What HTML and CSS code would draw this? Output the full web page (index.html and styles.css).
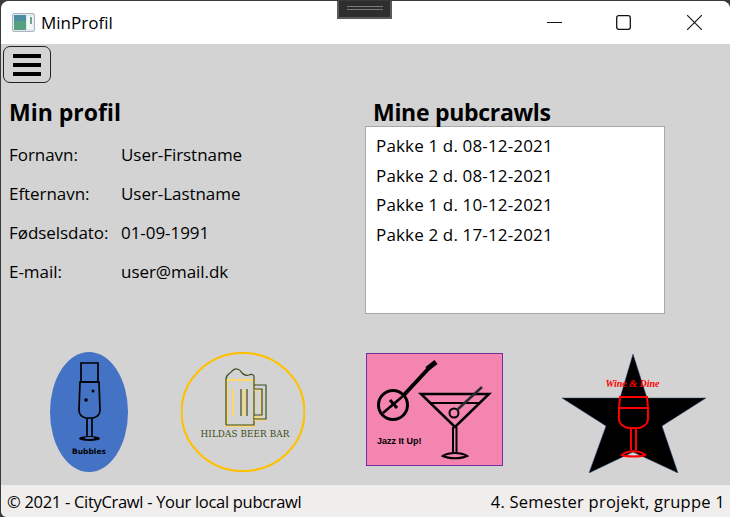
FILE: index.html
```
<!DOCTYPE html>
<html lang="da">
<head>
<meta charset="utf-8">
<title>MinProfil</title>
<link rel="stylesheet" href="styles.css">
</head>
<body>
<div class="window">
  <div class="grip"><span class="grip-lines"></span></div>
  <header class="titlebar">
    <svg class="app-icon" width="24" height="20" viewBox="0 0 24 20">
      <rect x="0.5" y="0.5" width="22" height="18" rx="1.5" fill="#e4e9f0" stroke="#aab4c4"/>
      <rect x="2" y="2" width="12" height="15" fill="#55a07f"/>
      <rect x="2" y="2" width="12" height="6" fill="#4a8ea0"/>
      <rect x="15" y="3" width="6" height="13" fill="#f4f7fa"/>
      <rect x="18" y="4" width="2" height="7" fill="#6fa585"/>
    </svg>
    <span class="app-title">MinProfil</span>
    <div class="win-controls">
      <svg class="win-btn win-min" width="15" height="15" viewBox="0 0 15 15"><path d="M0 7.5H15" stroke="#111" fill="none"/></svg>
      <svg class="win-btn" width="15" height="15" viewBox="0 0 15 15"><rect x="0.7" y="0.7" width="13.6" height="13.6" rx="2" stroke="#111" stroke-width="1.3" fill="none"/></svg>
      <svg class="win-btn" width="15" height="15" viewBox="0 0 15 15"><path d="M0 0L15 15M15 0L0 15" stroke="#111" stroke-width="1.1" fill="none"/></svg>
    </div>
  </header>

  <main class="content">
    <button class="menu-btn" type="button" aria-label="Menu">
      <span class="bar"></span><span class="bar"></span><span class="bar"></span>
    </button>

    <div class="columns">
      <section class="profile">
        <h2 class="heading heading-profile">Min profil</h2>
        <dl class="fields">
          <div class="field"><dt>Fornavn:</dt><dd>User-Firstname</dd></div>
          <div class="field"><dt>Efternavn:</dt><dd>User-Lastname</dd></div>
          <div class="field"><dt>Fødselsdato:</dt><dd>01-09-1991</dd></div>
          <div class="field"><dt>E-mail:</dt><dd>user@mail.dk</dd></div>
        </dl>
      </section>
      <section class="crawls">
        <h2 class="heading crawls-heading">Mine pubcrawls</h2>
        <ul class="listbox">
          <li>Pakke 1 d. 08-12-2021</li>
          <li>Pakke 2 d. 08-12-2021</li>
          <li>Pakke 1 d. 10-12-2021</li>
          <li>Pakke 2 d. 17-12-2021</li>
        </ul>
      </section>
    </div>

    <div class="logos">
      <svg class="logo logo-bubbles" width="78" height="120" viewBox="0 0 78 120">
        <ellipse cx="39" cy="60" rx="39" ry="60" fill="#4472c4"/>
        <g fill="none" stroke="#000" stroke-width="1.7">
          <path d="M31 11H48V30H31Z"/>
          <path d="M30 30H49L50 58C50 63 47 65 43 66H36C32 65 29 63 29 58Z"/>
          <path d="M37 66V85M42 66V85"/>
        </g>
        <ellipse cx="39.500" cy="86.500" rx="10.500" ry="2.500" fill="#000"/>
        <ellipse cx="39.500" cy="86" rx="5" ry="1" fill="#4472c4"/>
        <circle cx="36" cy="48" r="1.800" fill="#000"/>
        <circle cx="43" cy="39" r="1.500" fill="#000"/>
        <text class="logo-text-bubbles" x="39" y="102">Bubbles</text>
      </svg>

      <svg class="logo logo-beer" width="124" height="120" viewBox="0 0 124 120">
        <ellipse cx="62" cy="60" rx="61.500" ry="59" fill="none" stroke="#ffc000" stroke-width="2.200"/>
        <g fill="none">
          <path d="M45 28H73M46 27V74H73V28" stroke="#ffd966" stroke-width="2"/>
          <path d="M45 27V72C45 73 45 73 46 73H73V25C73 22 70 22 68 23C65 24 62 22 61 21C58 16 54 16 51 19C49 22 45 22 45 27Z" stroke="#3b4d20" stroke-width="1.200"/>
          <path d="M73 38H80V65H73M73 68H85" stroke="#ffd966" stroke-width="1.500"/>
          <path d="M73 33H85V67H73M73 37H81V63H73" stroke="#3b4d20" stroke-width="1.200"/>
          <path d="M52 37V64M63 37V64" stroke="#ffd966" stroke-width="2"/>
          <path d="M60 37V64M66 37V64" stroke="#3b4d20" stroke-width="1.200"/>
        </g>
        <text class="logo-text-beer" x="64" y="85">HILDAS BEER BAR</text>
      </svg>

      <svg class="logo logo-jazz" width="137" height="113" viewBox="0 0 137 113">
        <rect x="0.500" y="0.500" width="136" height="112" fill="#f385b0" stroke="#7030a0"/>
        <g fill="none" stroke="#000">
          <circle cx="27" cy="52" r="14.500" stroke-width="3"/>
          <path d="M17 60L37 43" stroke-width="2.500"/>
          <path d="M37 43L63 15" stroke-width="4"/>
          <path d="M24 47L31 55" stroke-width="3"/>
          <path d="M61 16L70 9" stroke-width="5"/>
          <path d="M55 41H123L89 74Z" stroke-width="2.500"/>
          <path d="M64 50H114" stroke-width="2.200"/>
          <path d="M87 74V99M90.500 74V99" stroke-width="2"/>
          <path d="M77 103C83 99 95 99 101 103C95 106 83 106 77 103Z" stroke-width="2.200"/>
          <circle cx="88" cy="60" r="4.500" stroke-width="2"/>
          <path d="M91 57L116 34" stroke-width="2.500" stroke="#2a2a2a"/>
        </g>
        <text class="logo-text-jazz" x="11" y="91">Jazz It Up!</text>
      </svg>

      <svg class="logo logo-wine" width="144" height="119" viewBox="0 0 144 119">
        <path d="M71 0L85 44H144L100 72L116 119L71 98L27 119L44 72L0 44H58Z" fill="#000" stroke="#2f4f7f" stroke-width="0.500"/>
        <text class="logo-text-wine" x="70.500" y="33">Wine &amp; Dine</text>
        <g fill="none" stroke="#f00" stroke-width="2">
          <path d="M58 43H85L86 54H57ZM57 54V65C57 70 62 73 66 74H77C81 73 86 70 86 65V54"/>
          <path d="M69 74V96M74 74V96"/>
          <path d="M60 101C65 96 78 96 83 101C78 103 65 103 60 101Z"/>
        </g>
      </svg>
    </div>
  </main>

  <footer class="statusbar">
    <span class="status-left">© 2021 - CityCrawl - Your local pubcrawl</span>
    <span class="status-right">4. Semester projekt, gruppe 1</span>
  </footer>
</div>
</body>
</html>
```

FILE: styles.css
```
* {
  box-sizing: border-box;
}

html,
body {
  margin: 0;
  padding: 0;
  height: 100%;
  background: #3a3a3a;
}

body {
  width: 730px;
  height: 517px;
  overflow: hidden;
  font-family: "Open Sans", "Noto Sans", sans-serif;
  color: #000;
}

.window {
  position: relative;
  display: flex;
  flex-direction: column;
  width: 729px;
  height: 516px;
  margin: 1px 0 0 1px;
  border-radius: 8px 8px 0 6px;
  overflow: hidden;
  background: #d3d3d3;
}

.grip {
  position: absolute;
  top: -1px;
  left: 336px;
  width: 55px;
  height: 19px;
  background: #2e2e2e;
  border: 2px solid #5a5a5a;
  border-top: 0;
  display: flex;
  align-items: center;
  justify-content: center;
  padding-bottom: 1px;
}

.grip-lines {
  display: block;
  width: 36px;
  height: 4px;
  border-top: 1px solid #777;
  border-bottom: 1px solid #777;
}

.titlebar {
  display: flex;
  align-items: center;
  height: 43px;
  flex: none;
  background: #fff;
  padding-left: 11px;
}

.app-icon {
  margin-right: 5px;
  flex: none;
}

.app-title {
  font-size: 17px;
}

.win-controls {
  display: flex;
  align-items: center;
  gap: 56px;
  margin-left: auto;
  padding-right: 28px;
}

.win-btn {
  display: block;
}

.win-min {
  margin-right: -2px;
}

.content {
  flex: 1;
  display: flex;
  flex-direction: column;
  min-height: 0;
  padding: 2px 0 0 2px;
}

.menu-btn {
  display: flex;
  flex-direction: column;
  justify-content: center;
  align-items: center;
  gap: 5px;
  width: 48px;
  height: 37px;
  padding: 0;
  background: transparent;
  border: 1px solid #222;
  border-radius: 7px;
}

.bar {
  display: block;
  width: 28px;
  height: 4px;
  background: #000;
}

.columns {
  display: flex;
  margin-top: 15px;
  height: 254px;
}

.profile {
  width: 362px;
  padding-left: 6px;
}

.crawls {
  width: 300px;
}

.heading {
  margin: 0;
  font-size: 23px;
  line-height: 28px;
  font-weight: 700;
  letter-spacing: -0.3px;
}

.heading-profile {
  letter-spacing: 0;
}

.crawls-heading {
  padding-left: 8px;
}

.fields {
  margin: 0;
  padding-top: 9px;
}

.field {
  display: flex;
  height: 39px;
  align-items: center;
  font-size: 17px;
  letter-spacing: -0.05px;
}

.field dt {
  width: 112px;
}

.field dd {
  margin: 0;
}

.listbox {
  list-style: none;
  margin: 0;
  padding: 4px 0 0 10px;
  width: 300px;
  height: 188px;
  background: #fff;
  border: 1px solid #a9a9a9;
}

.listbox li {
  height: 29.700px;
  line-height: 29.700px;
  font-size: 17px;
  letter-spacing: 0.15px;
  white-space: nowrap;
}

.logos {
  display: flex;
  align-items: flex-start;
  padding: 0 0 0 47px;
  height: 133px;
}

.logo {
  display: block;
  flex: none;
}

.logo-beer {
  margin-left: 53px;
}

.logo-jazz {
  margin-left: 61px;
  margin-top: 1px;
}

.logo-wine {
  margin-left: 59px;
  margin-top: 2px;
}

.logo-text-bubbles {
  font-family: "DejaVu Sans", sans-serif;
  font-size: 7.500px;
  font-weight: 700;
  text-anchor: middle;
}

.logo-text-beer {
  font-family: "DejaVu Serif", serif;
  font-size: 8.800px;
  letter-spacing: 0.1px;
  fill: #3b4d20;
  text-anchor: middle;
}

.logo-text-jazz {
  font-family: "Liberation Sans", sans-serif;
  font-size: 9px;
  font-weight: 700;
}

.logo-text-wine {
  font-family: "Liberation Serif", serif;
  font-size: 10px;
  font-style: italic;
  font-weight: 700;
  fill: #f00;
  text-anchor: middle;
}

.statusbar {
  flex: none;
  display: flex;
  justify-content: space-between;
  align-items: center;
  height: 32px;
  background: #f0eded;
  padding: 0 5px 0 6px;
  font-size: 16.500px;
}

.status-left {
  letter-spacing: -0.3px;
}

.status-right {
  letter-spacing: 0.24px;
}
```
